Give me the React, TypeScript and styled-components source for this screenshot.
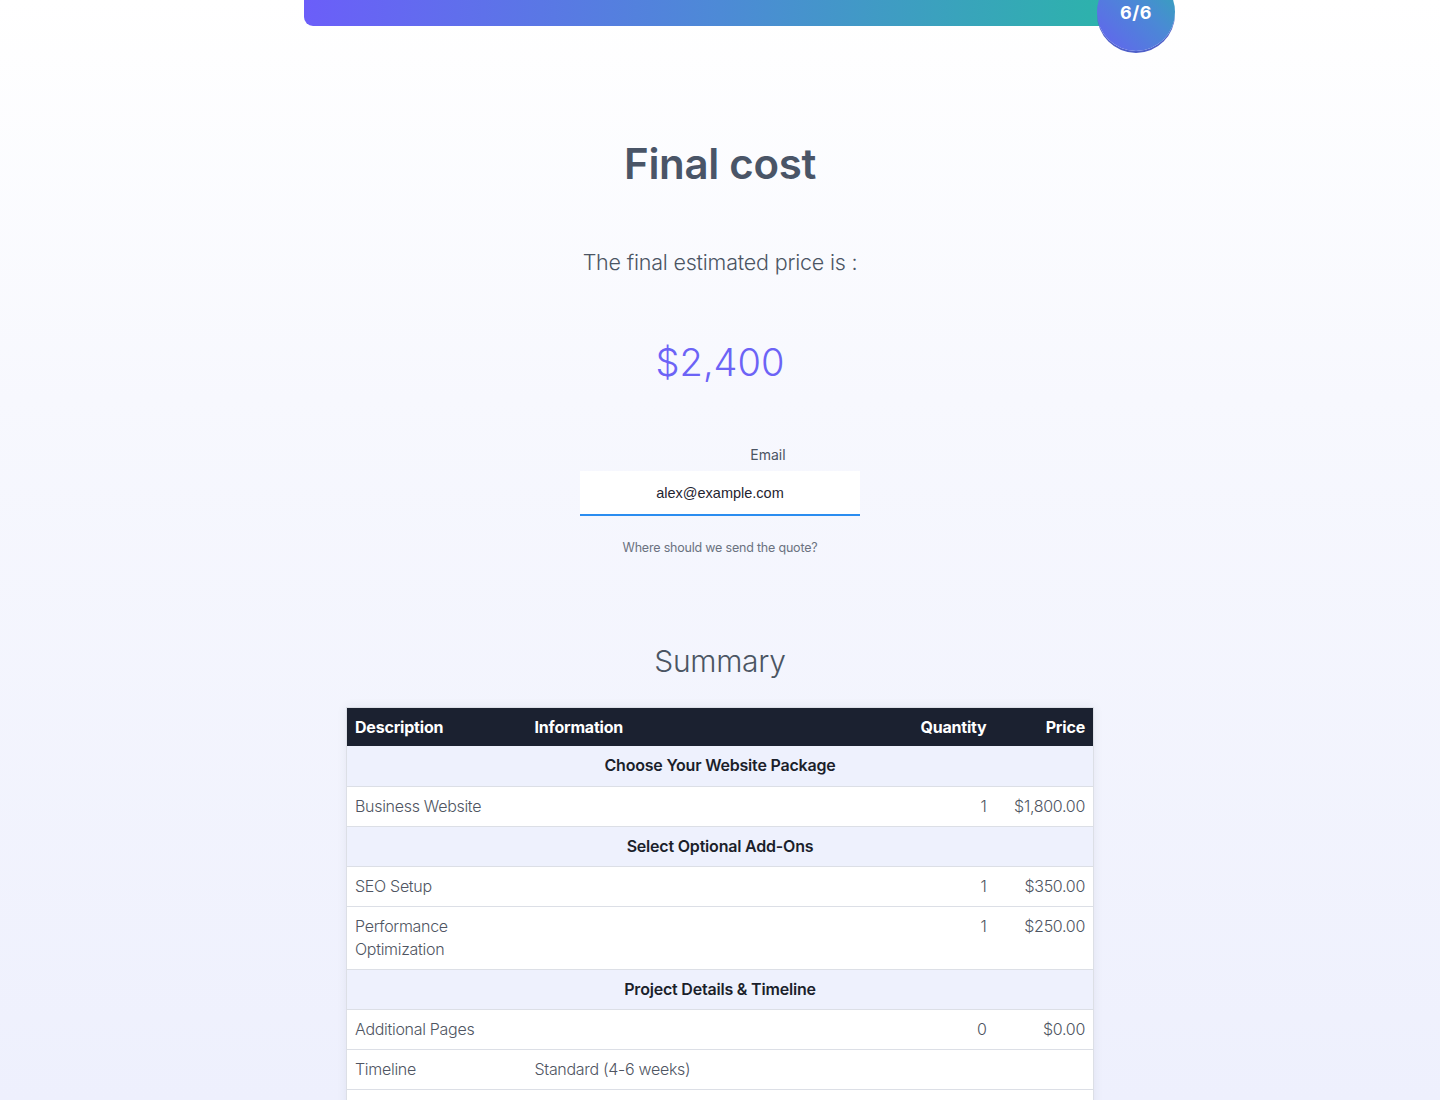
import React from "react";
import styled, { createGlobalStyle } from "styled-components";

const GlobalStyle = createGlobalStyle`
  html, body { margin: 0; padding: 0; }
  body {
    font-family: "Inter", "Noto Sans", sans-serif;
    background: linear-gradient(180deg, #ffffff 0px, #f7f8fe 400px, #eef0fd 1100px);
    min-height: 1100px;
    color: #4b5563;
  }
  * { box-sizing: border-box; }
`;

const Page = styled.div`
  display: flex;
  flex-direction: column;
  align-items: center;
  min-height: 1100px;
`;

const ProgressWrap = styled.div`
  position: relative;
  width: 832px;
  height: 26px;
`;

const ProgressBar = styled.div`
  height: 26px;
  width: 100%;
  border-radius: 0 0 9px 9px;
  background: linear-gradient(90deg, #6b5ef9 0%, #4d8ad6 50%, #2ab6a8 100%);
`;

const StepBadge = styled.div`
  position: absolute;
  right: -39px;
  top: -27px;
  width: 78px;
  height: 78px;
  border-radius: 50%;
  background: linear-gradient(45deg, #6561f0 0%, #4b88d6 55%, #30aab4 100%);
  box-shadow: 0 2px 0 #4e5fc9;
  display: flex;
  align-items: center;
  justify-content: center;
  color: #ffffff;
  font-weight: 700;
  font-size: 18px;
  letter-spacing: 0.5px;
`;

const Title = styled.h1`
  margin: 112px 0 0;
  font-size: 42px;
  font-weight: 600;
  color: #4a5567;
  line-height: 52px;
  letter-spacing: -0.3px;
`;

const Subtitle = styled.p`
  margin: 58px 0 0;
  font-size: 21.5px;
  font-weight: 300;
  color: #4b5563;
  line-height: 28px;
  letter-spacing: -0.2px;
`;

const Price = styled.div`
  margin: 61px 0 0;
  font-size: 38px;
  font-weight: 300;
  color: #6c63f6;
  line-height: 50px;
`;

const Field = styled.div`
  margin-top: 58px;
  width: 280px;
  display: flex;
  flex-direction: column;
`;

const Label = styled.label`
  padding-left: 96px;
  text-align: center;
  font-size: 14px;
  color: #4b5563;
  line-height: 20px;
  margin-bottom: 6px;
`;

const Input = styled.input`
  width: 280px;
  height: 45px;
  border: none;
  border-bottom: 2px solid #2b8df0;
  background: #ffffff;
  text-align: center;
  font-family: "Liberation Sans", Arial, sans-serif;
  font-size: 14.5px;
  color: #1f2430;
  outline: none;
`;

const Helper = styled.div`
  margin-top: 24px;
  text-align: center;
  font-size: 12.5px;
  color: #6b7280;
  letter-spacing: -0.2px;
`;

const SummaryTitle = styled.h2`
  margin: 86px 0 0;
  font-size: 30px;
  font-weight: 300;
  color: #4b5563;
  line-height: 40px;
  letter-spacing: -0.3px;
`;

const TableWrap = styled.div`
  margin-top: 26px;
  width: 748px;
  box-shadow: 0 0 10px rgba(40, 50, 90, 0.07);
`;

const Table = styled.table`
  width: 100%;
  border-collapse: collapse;
  border: 1px solid #dcdfe6;
  table-layout: fixed;
  font-size: 16px;
`;

const Th = styled.th<{ $align?: "left" | "right" }>`
  background: #1b2130;
  color: #ffffff;
  font-weight: 700;
  text-align: ${(p) => p.$align || "left"};
  padding: 8px;
  line-height: 22px;
  letter-spacing: -0.2px;
`;

const GroupCell = styled.td`
  background: #eef1fd;
  text-align: center;
  font-weight: 600;
  color: #1b1f2b;
  padding: 8px;
  line-height: 23px;
  height: 40px;
  border-bottom: 1px solid #dcdfe6;
  letter-spacing: -0.2px;
`;

const Td = styled.td<{ $align?: "left" | "right" }>`
  background: #ffffff;
  text-align: ${(p) => p.$align || "left"};
  vertical-align: top;
  font-weight: 300;
  color: #4f5562;
  padding: 8px;
  line-height: 23px;
  height: 40px;
  border-bottom: 1px solid #dcdfe6;
  letter-spacing: -0.3px;
`;

type Item = { id: string; desc: string; info?: string; qty?: string; price?: string };
type Group = { title: string; items: Item[] };

const groups: Group[] = [
  {
    title: "Choose Your Website Package",
    items: [{ id: "pkg", desc: "Business Website", qty: "1", price: "$1,800.00" }],
  },
  {
    title: "Select Optional Add-Ons",
    items: [
      { id: "seo", desc: "SEO Setup", qty: "1", price: "$350.00" },
      { id: "perf", desc: "Performance Optimization", qty: "1", price: "$250.00" },
    ],
  },
  {
    title: "Project Details & Timeline",
    items: [
      { id: "pages", desc: "Additional Pages", qty: "0", price: "$0.00" },
      { id: "time", desc: "Timeline", info: "Standard (4-6 weeks)" },
      { id: "more", desc: "" },
    ],
  },
];

export default function App() {
  return (
    <>
      <GlobalStyle />
      <Page>
        <ProgressWrap>
          <ProgressBar />
          <StepBadge>6/6</StepBadge>
        </ProgressWrap>
        <Title>Final cost</Title>
        <Subtitle>The final estimated price is :</Subtitle>
        <Price>$2,400</Price>
        <Field>
          <Label htmlFor="email">Email</Label>
          <Input id="email" type="email" defaultValue="alex@example.com" />
          <Helper>Where should we send the quote?</Helper>
        </Field>
        <SummaryTitle>Summary</SummaryTitle>
        <TableWrap>
          <Table>
            <colgroup>
              <col style={{ width: 180 }} />
              <col />
              <col style={{ width: 100 }} />
              <col style={{ width: 99 }} />
            </colgroup>
            <thead>
              <tr>
                <Th>Description</Th>
                <Th>Information</Th>
                <Th $align="right">Quantity</Th>
                <Th $align="right">Price</Th>
              </tr>
            </thead>
            <tbody>
              {groups.map((g) => (
                <React.Fragment key={g.title}>
                  <tr>
                    <GroupCell colSpan={4}>{g.title}</GroupCell>
                  </tr>
                  {g.items.map((it) => (
                    <tr key={it.id}>
                      <Td>{it.desc}</Td>
                      <Td>{it.info || ""}</Td>
                      <Td $align="right">{it.qty || ""}</Td>
                      <Td $align="right">{it.price || ""}</Td>
                    </tr>
                  ))}
                </React.Fragment>
              ))}
            </tbody>
          </Table>
        </TableWrap>
      </Page>
    </>
  );
}
